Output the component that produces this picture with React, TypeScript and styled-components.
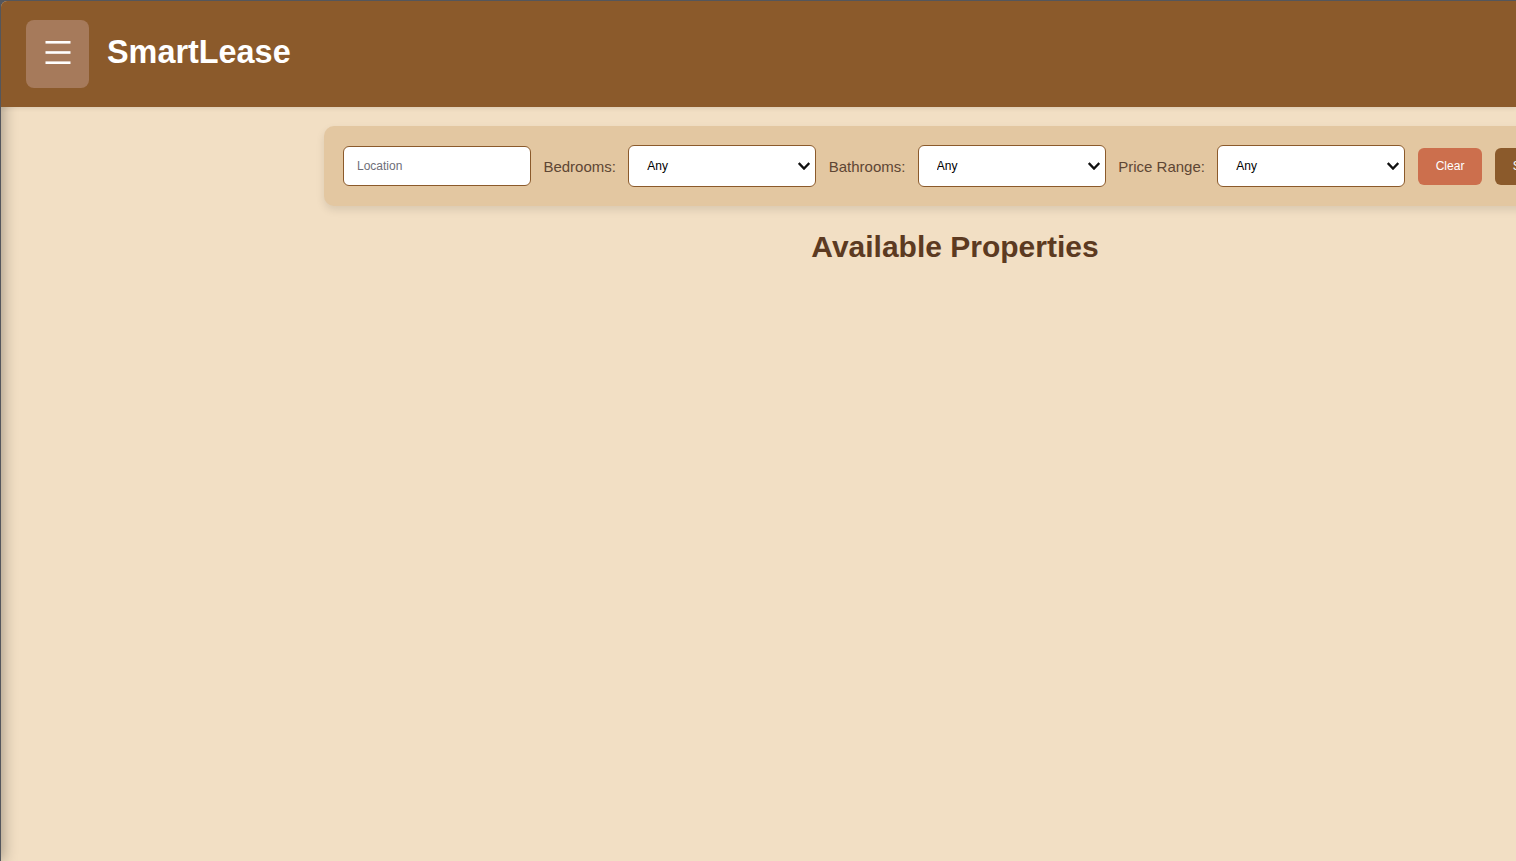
import React from "react";
import styled, { createGlobalStyle } from "styled-components";

const GlobalStyle = createGlobalStyle`
  html, body {
    margin: 0;
    padding: 0;
    background: #54565c;
    overflow: hidden;
  }
  * { box-sizing: border-box; }
`;

const Frame = styled.div`
  position: relative;
  margin: 1px 0 0 1px;
  width: calc(100vw - 1px);
  height: calc(100vh - 1px);
  background: #f2dfc4;
  border-top-left-radius: 6px;
  overflow: hidden;
  font-family: "Liberation Sans", Arial, sans-serif;
`;

const Sidebar = styled.aside`
  position: absolute;
  top: 0;
  left: -260px;
  width: 260px;
  height: 100%;
  background: #8b5a2b;
  box-shadow: 2px 0 14px rgba(0, 0, 0, 0.32);
  z-index: 1;
`;

const Header = styled.header`
  position: relative;
  z-index: 2;
  display: flex;
  align-items: center;
  gap: 18px;
  height: 106px;
  padding: 0 25px 1px;
  background: #8b5a2b;
  box-shadow: 0 2px 4px rgba(0, 0, 0, 0.08);
`;

const MenuButton = styled.button`
  display: flex;
  flex-direction: column;
  align-items: center;
  justify-content: center;
  width: 63px;
  height: 68px;
  padding: 0;
  border: none;
  border-radius: 8px;
  background: #a67a5b;
  cursor: pointer;
`;

const Title = styled.h1`
  margin: 0 0 3px;
  color: #ffffff;
  font-size: 32.4px;
  font-weight: 700;
  font-family: "Liberation Sans", Arial, sans-serif;
`;

const Main = styled.main`
  position: relative;
  padding: 19px 0 0 323px;
`;

const Content = styled.div`
  width: 1262px;
`;

const FilterBar = styled.div`
  display: flex;
  align-items: center;
  gap: 12.4px;
  height: 80px;
  padding: 0 19px;
  background: #e3c7a1;
  border-radius: 10px;
  box-shadow: 0 4px 8px rgba(0, 0, 0, 0.1);
  white-space: nowrap;
  & > * { flex-shrink: 0; }
`;

const TextInput = styled.input`
  width: 188px;
  height: 40px;
  padding: 0 13px;
  border: 1px solid #8b5a2b;
  border-radius: 6px;
  background: #ffffff;
  font-family: "Liberation Sans", Arial, sans-serif;
  font-size: 12px;
  color: #222;
  outline: none;
  &::placeholder { color: #6e6e78; }
`;

const Label = styled.label`
  font-size: 15px;
  color: #5e4634;
`;

const SelectWrap = styled.div`
  position: relative;
  width: 188px;
  height: 42px;
`;

const Select = styled.select`
  appearance: none;
  -webkit-appearance: none;
  width: 100%;
  height: 100%;
  padding: 0 30px 0 18px;
  border: 1px solid #8b5a2b;
  border-radius: 6px;
  background: #ffffff;
  font-family: "Liberation Sans", Arial, sans-serif;
  font-size: 12px;
  color: #000;
  outline: none;
`;

const Chevron = styled.svg`
  position: absolute;
  right: 6px;
  top: 17px;
  width: 12px;
  height: 9px;
  pointer-events: none;
`;

const ActionButton = styled.button<{ $variant: "clear" | "search" }>`
  height: 37px;
  padding: 0 18px;
  border: none;
  border-radius: 6px;
  background: ${(p) => (p.$variant === "clear" ? "#cc6f4d" : "#8b5a2b")};
  color: #ffffff;
  font-family: "Liberation Sans", Arial, sans-serif;
  font-size: 12px;
  cursor: pointer;
`;

const Heading = styled.h2`
  margin: 24px 0 0;
  text-align: center;
  font-size: 30px;
  font-weight: 700;
  color: #5c3a21;
`;

const HamburgerIcon = () => (
  <svg width="26" height="26" viewBox="0 0 26 26" aria-hidden="true">
    <rect x="0.5" y="0" width="25" height="2.6" fill="#fff" />
    <rect x="0.5" y="10.2" width="25" height="2.6" fill="#fff" />
    <rect x="0.5" y="20.4" width="25" height="2.6" fill="#fff" />
  </svg>
);

const FilterSelect = ({ options }: { options: string[] }) => (
  <SelectWrap>
    <Select defaultValue={options[0]}>
      {options.map((o) => (
        <option key={o}>{o}</option>
      ))}
    </Select>
    <Chevron viewBox="0 0 12 9" aria-hidden="true">
      <path
        d="M1.5 1.8 L6 6.5 L10.5 1.8"
        fill="none"
        stroke="#111"
        strokeWidth="2.3"
        strokeLinecap="square"
      />
    </Chevron>
  </SelectWrap>
);

const counts = ["Any", "1", "2", "3", "4+"];
const prices = ["Any", "Under $1000", "$1000 - $2000", "$2000+"];

export default function App() {
  return (
    <>
      <GlobalStyle />
      <Frame>
        <Sidebar />
        <Header>
          <MenuButton aria-label="Menu">
            <HamburgerIcon />
          </MenuButton>
          <Title>SmartLease</Title>
        </Header>
        <Main>
          <Content>
            <FilterBar>
              <TextInput placeholder="Location" />
              <Label>Bedrooms:</Label>
              <FilterSelect options={counts} />
              <Label>Bathrooms:</Label>
              <FilterSelect options={counts} />
              <Label>Price Range:</Label>
              <FilterSelect options={prices} />
              <ActionButton $variant="clear">Clear</ActionButton>
              <ActionButton $variant="search">Search</ActionButton>
            </FilterBar>
            <Heading>Available Properties</Heading>
          </Content>
        </Main>
      </Frame>
    </>
  );
}
